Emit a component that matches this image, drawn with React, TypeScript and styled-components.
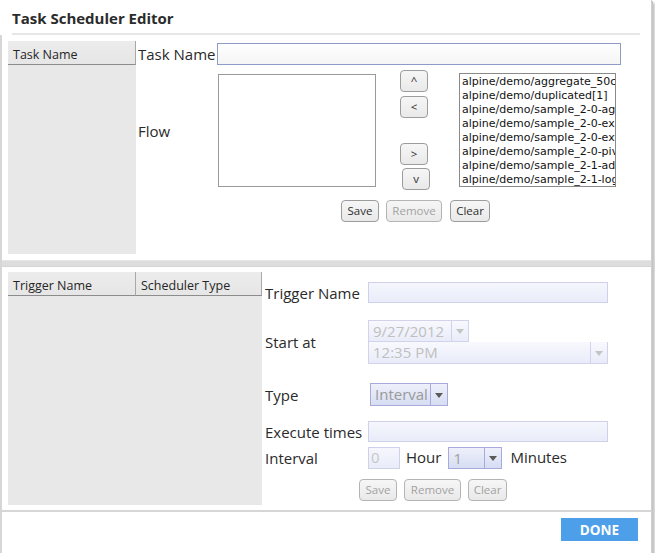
import React from "react";
import styled, { createGlobalStyle } from "styled-components";

const Global = createGlobalStyle`
  html, body { margin: 0; padding: 0; background: #ffffff; }
  body { font-family: "Open Sans", "Noto Sans", sans-serif; color: #2a2a2a; }
  * { box-sizing: border-box; }
`;

const Dialog = styled.div`
  width: 652px;
  height: 553px;
  background: #fff;
  display: flex;
  flex-direction: column;
  box-shadow: 1px 1px 0 #c4c4c4, 3px 3px 2px rgba(0, 0, 0, 0.22);
`;

const TitleBar = styled.div`
  height: 35px;
  padding: 0 11px 0 12px;
  display: flex;
  flex-direction: column;
  border-right: 1px solid #d0d0d0;
`;

const Title = styled.h1`
  margin: 0;
  flex: 1;
  display: flex;
  align-items: center;
  padding-top: 2px;
  font-size: 15px;
  font-weight: 700;
  color: #2b2b2b;
`;

const TitleRule = styled.div`
  height: 2px;
  background: #e6e6e6;
`;

const Body = styled.div`
  display: flex;
  flex-direction: column;
  border-left: 2px solid #d6d6d6;
  border-right: 1px solid #cfcfcf;
`;

const Panel = styled.div<{ $h: number; $pt: number }>`
  height: ${(p) => p.$h}px;
  padding: ${(p) => p.$pt}px 0 0 6px;
  display: flex;
  align-items: flex-start;
  background: #fff;
`;

const Band = styled.div`
  height: 7px;
  background: #dddddd;
  border-top: 1px solid #e6e6e6;
  border-bottom: 1px solid #d4d4d4;
`;

const ListPane = styled.div<{ $w: number; $h: number }>`
  width: ${(p) => p.$w}px;
  height: ${(p) => p.$h}px;
  background: #e8e8e8;
  flex-shrink: 0;
`;

const HeaderRow = styled.div`
  display: flex;
  height: 24px;
`;

const HeaderCell = styled.div<{ $w: number }>`
  width: ${(p) => p.$w}px;
  height: 24px;
  display: flex;
  align-items: center;
  padding: 3px 0 0 5px;
  font-size: 12.5px;
  color: #262626;
  border-bottom: 1px solid #8c8c8c;
  border-right: 1px solid #a8a8a8;
  background: linear-gradient(#ececec, #e6e6e6);
`;

const TaskForm = styled.div`
  flex: 1;
  display: grid;
  grid-template-columns: 80px auto;
  grid-template-rows: 22px 113px auto;
  row-gap: 9px;
  padding: 2px 0 0 2px;
  align-items: center;
`;

const Label = styled.div`
  font-size: 15px;
  color: #2a2a2a;
  white-space: nowrap;
`;

const TextInput = styled.div<{ $w: number; $h?: number }>`
  width: ${(p) => p.$w}px;
  height: ${(p) => p.$h ?? 22}px;
  border: 1px solid #8e9bc8;
  background: linear-gradient(#ffffff, #f5f5f5);
`;

const FlowRow = styled.div`
  display: flex;
  align-items: flex-start;
  height: 113px;
`;

const FlowBox = styled.div`
  width: 158px;
  height: 113px;
  border: 1px solid #9a9a9a;
  background: #fff;
`;

const ArrowCol = styled.div`
  display: flex;
  flex-direction: column;
  margin: -4px 0 0 24px;
  width: 30px;
`;

const Button = styled.button<{ $w: number; $off?: boolean; $ml?: number }>`
  width: ${(p) => p.$w}px;
  height: 22px;
  margin-left: ${(p) => p.$ml ?? 0}px;
  padding: 0;
  border: 1px solid ${(p) => (p.$off ? "#b4b4b4" : "#9c9c9c")};
  border-radius: 4px;
  background: linear-gradient(#f6f6f6, #e9e9e9);
  font-family: "Open Sans", sans-serif;
  font-size: 11.5px;
  color: ${(p) => (p.$off ? "#a2a2a2" : "#2e2e2e")};
  line-height: 20px;
  flex-shrink: 0;
`;

const ArrowSpacer = styled.div<{ $h: number }>`
  height: ${(p) => p.$h}px;
`;

const FlowList = styled.div`
  width: 157px;
  height: 114px;
  margin: -1px 0 0 29px;
  border: 1px solid #8a8a8a;
  background: #fff;
  overflow: hidden;
  padding: 1px 0 0 2px;
`;

const FlowItem = styled.div`
  font-family: "DejaVu Sans", sans-serif;
  font-size: 11px;
  line-height: 14px;
  color: #111;
  white-space: nowrap;
  overflow: hidden;
`;

const ButtonRow = styled.div<{ $ml: number; $mt: number }>`
  display: flex;
  gap: 7px;
  margin: ${(p) => p.$mt}px 0 0 ${(p) => p.$ml}px;
`;

const TriggerForm = styled.div`
  flex: 1;
  display: flex;
  flex-direction: column;
  padding-left: 3px;
`;

const FormRow = styled.div<{ $mt: number }>`
  display: flex;
  align-items: center;
  margin-top: ${(p) => p.$mt}px;
`;

const LabelCell = styled.div`
  width: 103px;
  font-size: 15px;
  color: #2a2a2a;
  white-space: nowrap;
  flex-shrink: 0;
`;

const SoftInput = styled.div<{ $w: number; $h?: number }>`
  width: ${(p) => p.$w}px;
  height: ${(p) => p.$h ?? 21}px;
  border: 1px solid #cfd0ea;
  background: linear-gradient(#f5f6fd, #e9ecf9);
  font-size: 15px;
  color: #c8c8c8;
  padding-left: 2px;
  line-height: 19px;
`;

const Stack = styled.div`
  display: flex;
  flex-direction: column;
`;

const Combo = styled.div<{ $w: number; $h?: number; $strong?: boolean; $ml?: number }>`
  width: ${(p) => p.$w}px;
  height: ${(p) => p.$h ?? 22}px;
  margin-left: ${(p) => p.$ml ?? 0}px;
  display: flex;
  border: 1px solid ${(p) => (p.$strong ? "#a9aadb" : "#d2d3ea")};
  background: ${(p) =>
    p.$strong
      ? "linear-gradient(#eef0fa, #d6ddf3)"
      : "linear-gradient(#f8f9fe, #e9ecf9)"};
`;

const ComboText = styled.div<{ $c: string }>`
  flex: 1;
  font-size: 15px;
  line-height: 20px;
  padding-left: 4px;
  color: ${(p) => p.$c};
  white-space: nowrap;
  overflow: hidden;
`;

const ComboArrow = styled.div<{ $strong?: boolean }>`
  width: 17px;
  border-left: 1px solid ${(p) => (p.$strong ? "#a9aadb" : "#d2d3ea")};
  display: flex;
  align-items: center;
  justify-content: center;
  &::after {
    content: "";
    border-left: 4px solid transparent;
    border-right: 4px solid transparent;
    border-top: 5px solid ${(p) => (p.$strong ? "#5a5a5a" : "#c4c4c4")};
    margin-top: 1px;
  }
`;

const Unit = styled.span<{ $ml: number }>`
  font-size: 15px;
  color: #2a2a2a;
  margin-left: ${(p) => p.$ml}px;
  margin-top: -3px;
`;

const Footer = styled.div`
  flex: 1;
  border-top: 2px solid #d6d6d6;
  border-left: 2px solid #d6d6d6;
  border-right: 1px solid #cfcfcf;
  display: flex;
  justify-content: flex-end;
  align-items: flex-start;
  padding: 6px 13px 0 0;
`;

const DoneButton = styled.button`
  width: 77px;
  height: 23px;
  border: none;
  background: #4c9fe8;
  color: #fff;
  font-family: "Open Sans", sans-serif;
  font-weight: 700;
  font-size: 13.5px;
  padding: 0;
`;

const flows = [
  "alpine/demo/aggregate_50c",
  "alpine/demo/duplicated[1]",
  "alpine/demo/sample_2-0-agg",
  "alpine/demo/sample_2-0-exp",
  "alpine/demo/sample_2-0-ext",
  "alpine/demo/sample_2-0-piv",
  "alpine/demo/sample_2-1-adv",
  "alpine/demo/sample_2-1-log",
];

export default function App() {
  return (
    <>
      <Global />
      <Dialog>
        <TitleBar>
          <Title>Task Scheduler Editor</Title>
          <TitleRule />
        </TitleBar>
        <Body>
          <Panel $h={225} $pt={6}>
            <ListPane $w={128} $h={213}>
              <HeaderRow>
                <HeaderCell $w={128}>Task Name</HeaderCell>
              </HeaderRow>
            </ListPane>
            <TaskForm>
              <Label>Task Name</Label>
              <TextInput $w={404} style={{ marginLeft: -1 }} />
              <Label>Flow</Label>
              <FlowRow>
                <FlowBox />
                <ArrowCol>
                  <Button $w={28}>^</Button>
                  <ArrowSpacer $h={4} />
                  <Button $w={28}>&lt;</Button>
                  <ArrowSpacer $h={25} />
                  <Button $w={28}>&gt;</Button>
                  <ArrowSpacer $h={3} />
                  <Button $w={28} $ml={2}>v</Button>
                </ArrowCol>
                <FlowList>
                  {flows.map((f) => (
                    <FlowItem key={f}>{f}</FlowItem>
                  ))}
                </FlowList>
              </FlowRow>
              <div />
              <ButtonRow $ml={123} $mt={4}>
                <Button $w={38}>Save</Button>
                <Button $w={56} $off>Remove</Button>
                <Button $w={40} $ml={1}>Clear</Button>
              </ButtonRow>
            </TaskForm>
          </Panel>
          <Band />
          <Panel $h={243} $pt={5}>
            <ListPane $w={254} $h={233}>
              <HeaderRow>
                <HeaderCell $w={128}>Trigger Name</HeaderCell>
                <HeaderCell $w={126}>Scheduler Type</HeaderCell>
              </HeaderRow>
            </ListPane>
            <TriggerForm>
              <FormRow $mt={10}>
                <LabelCell>Trigger Name</LabelCell>
                <SoftInput $w={240} $h={21} />
              </FormRow>
              <FormRow $mt={17}>
                <LabelCell>Start at</LabelCell>
                <Stack>
                  <Combo $w={101}>
                    <ComboText $c="#bfbfbf">9/27/2012</ComboText>
                    <ComboArrow />
                  </Combo>
                  <Combo $w={240} style={{ borderTop: "none" }}>
                    <ComboText $c="#bfbfbf">12:35 PM</ComboText>
                    <ComboArrow />
                  </Combo>
                </Stack>
              </FormRow>
              <FormRow $mt={19}>
                <LabelCell>Type</LabelCell>
                <Combo $w={78} $h={23} $strong $ml={2}>
                  <ComboText $c="#9a9a9a">Interval</ComboText>
                  <ComboArrow $strong />
                </Combo>
              </FormRow>
              <FormRow $mt={15}>
                <LabelCell>Execute times</LabelCell>
                <SoftInput $w={240} $h={21} />
              </FormRow>
              <FormRow $mt={5}>
                <LabelCell>Interval</LabelCell>
                <SoftInput $w={32} $h={22}>0</SoftInput>
                <Unit $ml={6}>Hour</Unit>
                <Combo $w={54} $strong $ml={7}>
                  <ComboText $c="#a0a0a0">1</ComboText>
                  <ComboArrow $strong />
                </Combo>
                <Unit $ml={8}>Minutes</Unit>
              </FormRow>
              <ButtonRow $ml={94} $mt={10}>
                <Button $w={38} $off>Save</Button>
                <Button $w={57} $off>Remove</Button>
                <Button $w={39} $off>Clear</Button>
              </ButtonRow>
            </TriggerForm>
          </Panel>
        </Body>
        <Footer>
          <DoneButton>DONE</DoneButton>
        </Footer>
      </Dialog>
    </>
  );
}
